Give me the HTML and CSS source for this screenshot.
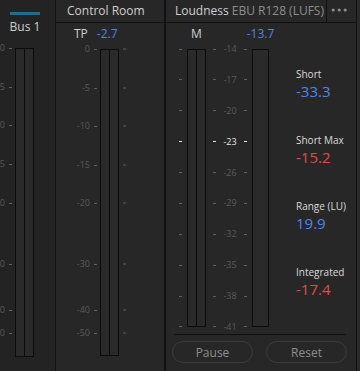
FILE: index.html
```html
<!DOCTYPE html>
<html>
<head>
<meta charset="utf-8">
<title>Meters</title>
<link rel="stylesheet" href="styles.css">
</head>
<body>
<div class="meters">

<div class="panel bus">
  <div class="bus-head">
    <div class="bus-bar"></div>
    <div class="bus-name">Bus 1</div>
  </div>
  <div class="strip bus-strip">
    <div class="scale">
      <div class="tick" style="top:0px">0<i></i></div>
      <div class="tick" style="top:39px">-5<i></i></div>
      <div class="tick" style="top:77px">-10<i></i></div>
      <div class="tick" style="top:116px">-15<i></i></div>
      <div class="tick" style="top:155px">-20<i></i></div>
      <div class="tick" style="top:216px">-30<i></i></div>
      <div class="tick" style="top:262px">-40<i></i></div>
      <div class="tick" style="top:285px">-50<i></i></div>
    </div>
    <div class="meter bus-meter"><span></span><span></span></div>
  </div>
</div>

<div class="panel control">
  <div class="head"><span class="title">Control Room</span></div>
  <div class="readout cr-readout"><span>TP</span><span class="blue">-2.7</span></div>
  <div class="strip cr-strip">
    <div class="scale">
      <div class="tick" style="top:0px">0<i></i></div>
      <div class="tick" style="top:39px">-5<i></i></div>
      <div class="tick" style="top:77px">-10<i></i></div>
      <div class="tick" style="top:116px">-15<i></i></div>
      <div class="tick" style="top:154px">-20<i></i></div>
      <div class="tick" style="top:215px">-30<i></i></div>
      <div class="tick" style="top:261px">-40<i></i></div>
      <div class="tick" style="top:284px">-50<i></i></div>
    </div>
    <div class="meter cr-meter"><span></span><span></span></div>
    <div class="rticks">
      <div class="tick" style="top:0px"><i></i></div>
      <div class="tick" style="top:39px"><i></i></div>
      <div class="tick" style="top:77px"><i></i></div>
      <div class="tick" style="top:116px"><i></i></div>
      <div class="tick" style="top:154px"><i></i></div>
      <div class="tick" style="top:215px"><i></i></div>
      <div class="tick" style="top:261px"><i></i></div>
      <div class="tick" style="top:284px"><i></i></div>
    </div>
  </div>
</div>

<div class="panel loud">
  <div class="head">
    <span class="title">Loudness</span><span class="sub">EBU R128 (LUFS)</span>
    <span class="more">
      <svg width="29" height="22" viewBox="0 0 29 22">
        <circle cx="6.2" cy="10" r="1.6" fill="#8c8c8c"/>
        <circle cx="12.2" cy="10" r="1.6" fill="#8c8c8c"/>
        <circle cx="18.2" cy="10" r="1.6" fill="#8c8c8c"/>
      </svg>
    </span>
  </div>
  <div class="loud-body">
    <div class="loud-grid">
      <div></div>
      <div class="rd">M</div>
      <div></div>
      <div class="rd blue">-13.7</div>

      <div class="lticks">
        <div class="row"><i></i></div>
        <div class="row"><i></i></div>
        <div class="row"><i></i></div>
        <div class="row hi"><i></i></div>
        <div class="row"><i></i></div>
        <div class="row"><i></i></div>
        <div class="row"><i></i></div>
        <div class="row"><i></i></div>
        <div class="row"><i></i></div>
        <div class="row"><i></i></div>
      </div>
      <div class="meter loud-meter"><span></span><span></span></div>
      <div class="lscale">
        <div class="row"><i></i>-14<i></i></div>
        <div class="row"><i></i>-17<i></i></div>
        <div class="row"><i></i>-20<i></i></div>
        <div class="row hi"><i></i>-23<i></i></div>
        <div class="row"><i></i>-26<i></i></div>
        <div class="row"><i></i>-29<i></i></div>
        <div class="row"><i></i>-32<i></i></div>
        <div class="row"><i></i>-35<i></i></div>
        <div class="row"><i></i>-38<i></i></div>
        <div class="row"><i></i>-41<i></i></div>
      </div>
      <div class="meter loud-meter mono"><span></span></div>
    </div>

    <div class="values">
      <div class="val">
        <div class="vlabel">Short</div>
        <div class="vnum blue">-33.3</div>
      </div>
      <div class="val">
        <div class="vlabel">Short Max</div>
        <div class="vnum red">-15.2</div>
      </div>
      <div class="val">
        <div class="vlabel">Range (LU)</div>
        <div class="vnum blue">19.9</div>
      </div>
      <div class="val">
        <div class="vlabel">Integrated</div>
        <div class="vnum red">-17.4</div>
      </div>
    </div>
  </div>
  <div class="rule"></div>
  <div class="buttons">
    <button class="btn">Pause</button>
    <button class="btn">Reset</button>
  </div>
</div>

<div class="edge"></div>

</div>
</body>
</html>
```

FILE: styles.css
```css
html, body {
   margin: 0;
   padding: 0;
   background-color: #272727;
}

body {
   font-family: "Open Sans", "DejaVu Sans", sans-serif;
   font-size: 12px;
   color: #cfcfcf;
}

.meters {
   display: flex;
   width: 360px;
   height: 371px;
   overflow: hidden;
}

.panel {
   box-sizing: border-box;
   height: 100%;
   background-color: #272727;
   border-right: 1px solid #111;
}

/* bus */

.bus {
   width: 56px;
   background-color: #232323;
   overflow: hidden;
}

.bus-head {
   width: 50px;
   display: flex;
   flex-direction: column;
   align-items: center;
}

.bus-bar {
   width: 30px;
   height: 3px;
   margin-top: 12px;
   background-color: #1d6d8c;
}

.bus-name {
   margin-top: 4px;
   line-height: 16px;
}

.strip {
   display: flex;
}

.bus-strip {
   margin-top: 13px;
}

/* scales */

.scale, .rticks {
   position: relative;
   font-size: 9px;
   color: #5a5a5a;
}

.bus .scale {
   width: 15px;
}

.control .scale {
   width: 44px;
}

.rticks {
   width: 10px;
}

.tick {
   position: absolute;
   right: 3px;
   display: flex;
   align-items: center;
   gap: 4px;
   line-height: 12px;
   white-space: nowrap;
   transform: translateY(-50%);
}

.rticks .tick {
   right: auto;
   left: 4px;
}

.tick i, .row i {
   display: block;
   width: 3px;
   height: 1px;
   background-color: #606060;
}

/* meters */

.meter {
   box-sizing: border-box;
   display: flex;
   border: 1px solid #0b0b0b;
   background-color: #2a2a2a;
}

.meter span {
   flex: 1;
}

.meter span + span {
   border-left: 1px solid #0b0b0b;
}

.bus-meter {
   width: 19px;
   height: 309px;
}

.cr-meter {
   width: 19px;
   height: 307px;
}

.loud-meter {
   height: 278px;
}

/* control room */

.control {
   width: 110px;
   border-right-width: 2px;
}

.head {
   box-sizing: border-box;
   display: flex;
   align-items: center;
   height: 23px;
   border-bottom: 1px solid #111;
   padding-bottom: 1px;
}

.control .head {
   padding-left: 11px;
}

.readout {
   display: flex;
   gap: 9px;
   margin-top: 3px;
   line-height: 16px;
}

.cr-readout {
   padding-left: 18px;
}

.cr-strip {
   margin-top: 7px;
}

.blue {
   color: #5286e4;
}

.red {
   color: #e44a45;
}

/* loudness */

.loud {
   width: 191px;
}

.loud .head {
   padding-left: 9px;
}

.sub {
   margin-left: 3px;
   color: #8e8e8e;
}

.more {
   margin-left: auto;
   width: 29px;
   height: 22px;
   border-left: 1px solid #111;
}

.more svg {
   display: block;
}

.loud-body {
   display: flex;
}

.loud-grid {
   display: grid;
   grid-template-columns: 21px 19px 46px 17px;
   grid-template-rows: 16px auto;
   row-gap: 7px;
   margin-top: 3px;
}

.rd {
   display: flex;
   justify-content: center;
   line-height: 16px;
   white-space: nowrap;
}

.lticks, .lscale {
   display: flex;
   flex-direction: column;
   justify-content: space-between;
   height: 290px;
   margin: -6px 0;
   font-size: 9px;
   color: #5a5a5a;
}

.row {
   display: flex;
   align-items: center;
   height: 12px;
   line-height: 12px;
}

.lticks .row {
   justify-content: flex-end;
   padding-right: 5px;
}

.lscale .row {
   justify-content: space-between;
   padding: 0 5px 0 7px;
}

.row.hi {
   color: #e6e6e6;
}

.row.hi i {
   background-color: #e6e6e6;
}

.values {
   margin-left: 27px;
   padding-top: 44px;
   display: flex;
   flex-direction: column;
   gap: 32px;
}

.vlabel {
   font-size: 10px;
   line-height: 14px;
   color: #dadada;
}

.vnum {
   font-size: 15px;
   line-height: 20px;
}

.rule {
   height: 1px;
   margin: 7px 10px 0 8px;
   background-color: #111;
}

.buttons {
   display: flex;
   gap: 13px;
   margin-top: 6px;
   padding-left: 6px;
}

.btn {
   box-sizing: border-box;
   width: 81px;
   height: 22px;
   padding: 0;
   border: 1px solid #3b3b3b;
   border-radius: 11px;
   background-color: transparent;
   font-family: "Open Sans", "DejaVu Sans", sans-serif;
   font-size: 12px;
   color: #8e8e8e;
}

.edge {
   width: 3px;
   height: 100%;
   background-color: #2a2a2a;
}
```
